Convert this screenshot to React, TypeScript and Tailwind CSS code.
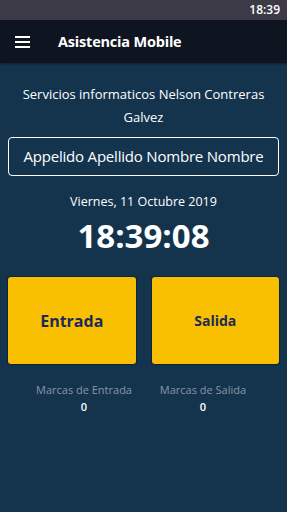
import React from "react";

export default function App() {
  return (
    <div
      className="w-[287px] h-[512px] flex flex-col bg-[#14344e] overflow-hidden"
      style={{ fontFamily: '"Open Sans", "Noto Sans", sans-serif' }}
    >
      {/* status bar */}
      <div className="h-[20px] bg-[#3b3a46] flex items-center justify-end pr-[7px]">
        <span className="text-white text-[12px] font-semibold leading-none">18:39</span>
      </div>
      {/* toolbar */}
      <div className="h-[43px] bg-[#0e1420] flex items-center shadow-[0_1px_2px_rgba(0,0,0,0.4)]">
        <div className="w-[58px] pl-[15px] flex flex-col gap-[3px]">
          <div className="w-[15px] h-[2px] bg-white" />
          <div className="w-[15px] h-[2px] bg-white" />
          <div className="w-[15px] h-[2px] bg-white" />
        </div>
        <span className="text-white text-[14.5px] font-bold tracking-[-0.2px]">Asistencia Mobile</span>
      </div>
      {/* content */}
      <div className="flex flex-col items-center px-[8px] pt-[20px]">
        <p className="text-white text-[13px] leading-[23px] text-center px-[10px]">
          Servicios informaticos Nelson Contreras Galvez
        </p>
        <div className="mt-[8px] w-full h-[39px] border border-white rounded-[4px] flex items-center justify-center">
          <span className="text-white text-[15px] tracking-[-0.2px]">Appelido Apellido Nombre Nombre</span>
        </div>
        <p className="mt-[18px] text-white text-[12.5px] leading-[16px]">Viernes, 11 Octubre 2019</p>
        <p className="mt-[6px] text-white text-[33px] font-bold leading-[40px]">18:39:08</p>
        <div className="mt-[21px] w-full grid grid-cols-2 gap-[16px]">
          <button className="h-[87px] bg-[#f8c000] rounded-[3px] shadow-[0_0_1px_1px_rgba(0,0,30,0.35)] flex items-center justify-center">
            <span className="text-[#1b2a5a] text-[16px] font-bold">Entrada</span>
          </button>
          <button className="h-[87px] bg-[#f8c000] rounded-[3px] shadow-[0_0_1px_1px_rgba(0,0,30,0.35)] flex items-center justify-center">
            <span className="text-[#1b2a5a] text-[14px] font-bold">Salida</span>
          </button>
        </div>
        <div className="mt-[19px] flex justify-center">
          <div className="w-[119px] flex flex-col items-center">
            <span className="text-[#8796a5] text-[11px] leading-[14px]">Marcas de Entrada</span>
            <span className="mt-[3px] text-white text-[11px] font-semibold leading-[14px]">0</span>
          </div>
          <div className="w-[119px] flex flex-col items-center">
            <span className="text-[#8796a5] text-[11px] leading-[14px]">Marcas de Salida</span>
            <span className="mt-[3px] text-white text-[11px] font-semibold leading-[14px]">0</span>
          </div>
        </div>
      </div>
    </div>
  );
}
